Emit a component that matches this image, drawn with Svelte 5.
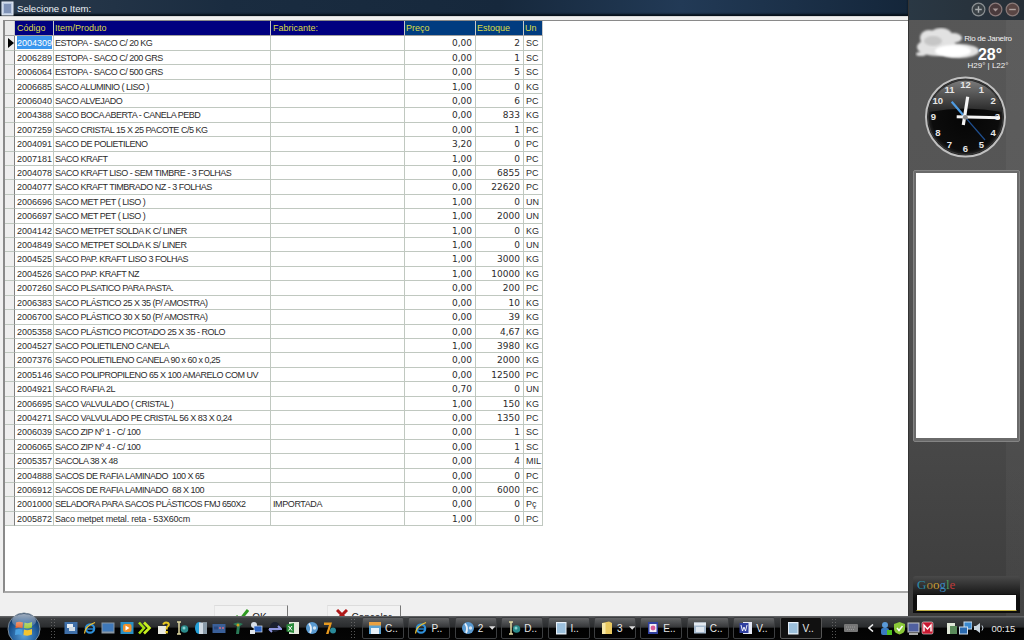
<script>
const rows = [
['2004309','ESTOPA - SACO C/ 20 KG','','0,00','2','SC'],
['2006289','ESTOPA - SACO C/ 200 GRS','','0,00','1','SC'],
['2006064','ESTOPA - SACO C/ 500 GRS','','0,00','5','SC'],
['2006685','SACO ALUMINIO ( LISO )','','1,00','0','KG'],
['2006040','SACO ALVEJADO','','0,00','6','PC'],
['2004388','SACO BOCA ABERTA - CANELA PEBD','','0,00','833','KG'],
['2007259','SACO CRISTAL 15 X 25 PACOTE C/5 KG','','0,00','1','PC'],
['2004091','SACO DE POLIETILENO','','3,20','0','PC'],
['2007181','SACO KRAFT','','1,00','0','PC'],
['2004078','SACO KRAFT LISO - SEM TIMBRE - 3 FOLHAS','','0,00','6855','PC'],
['2004077','SACO KRAFT TIMBRADO NZ - 3 FOLHAS','','0,00','22620','PC'],
['2006696','SACO MET PET ( LISO )','','1,00','0','UN'],
['2006697','SACO MET PET ( LISO )','','1,00','2000','UN'],
['2004142','SACO METPET SOLDA K C/ LINER','','1,00','0','KG'],
['2004849','SACO METPET SOLDA K S/ LINER','','1,00','0','UN'],
['2004525','SACO PAP. KRAFT LISO 3 FOLHAS','','1,00','3000','KG'],
['2004526','SACO PAP. KRAFT NZ','','1,00','10000','KG'],
['2007260','SACO PLSATICO PARA PASTA.','','0,00','200','PC'],
['2006383','SACO PLÁSTICO 25 X 35 (P/ AMOSTRA)','','0,00','10','KG'],
['2006700','SACO PLÁSTICO 30 X 50 (P/ AMOSTRA)','','0,00','39','KG'],
['2005358','SACO PLÁSTICO PICOTADO 25 X 35 - ROLO','','0,00','4,67','KG'],
['2004527','SACO POLIETILENO CANELA','','1,00','3980','KG'],
['2007376','SACO POLIETILENO CANELA 90 x 60 x 0,25','','0,00','2000','KG'],
['2005146','SACO POLIPROPILENO 65 X 100 AMARELO COM UV','','0,00','12500','PC'],
['2004921','SACO RAFIA 2L','','0,70','0','UN'],
['2006695','SACO VALVULADO ( CRISTAL )','','1,00','150','KG'],
['2004271','SACO VALVULADO PE CRISTAL 56 X 83 X 0,24','','0,00','1350','PC'],
['2006039','SACO ZIP Nº 1 - C/ 100','','0,00','1','SC'],
['2006065','SACO ZIP Nº 4 - C/ 100','','0,00','1','SC'],
['2005357','SACOLA 38 X 48','','0,00','4','MIL'],
['2004888','SACOS DE RAFIA LAMINADO  100 X 65','','0,00','0','PC'],
['2006912','SACOS DE RAFIA LAMINADO  68 X 100','','0,00','6000','PC'],
['2001000','SELADORA PARA SACOS PLÁSTICOS FMJ 650X2','IMPORTADA','0,00','0','Pç'],
['2005872','Saco metpet metal. reta - 53X60cm','','1,00','0','PC'],
];
const quick = ['printer','ie','monitor','play','chevrons','help','ibeam','book','film','figure','computers','arrows','excel','globe','seven'];
const tasks = [
 {t:'C..',i:'calc'},{t:'P..',i:'ie'},{t:'2',i:'globe',arrow:true},
 {t:'D..',i:'ibeam'},{t:'I..',i:'pale'},{t:'3',i:'folder',arrow:true},
 {t:'E..',i:'purple'},{t:'C..',i:'sheet'},{t:'V..',i:'word'},
 {t:'V..',i:'pale',active:true}
];
const numbers = Array.from({length:12},(_,k)=>{
  const n = k+1, a = n*Math.PI/6;
  return {n, x: 41.5+32*Math.sin(a), y: 41-32*Math.cos(a)+3.4};
});
</script>

{#snippet icon(name)}
  <svg class="ico" viewBox="0 0 14 14" width="14" height="14">
    {#if name==='printer'}
      <rect x="0.5" y="1" width="13" height="12" fill="#3f6fa8"/><rect x="3" y="3" width="6" height="4" fill="#e8eef4"/><rect x="5" y="6" width="6" height="4" fill="#cfdbe6"/>
    {:else if name==='ie'}
      <circle cx="7" cy="7.5" r="4.2" fill="none" stroke="#2f8fd8" stroke-width="2.2"/><path d="M3 8H11" stroke="#2f8fd8" stroke-width="1.4"/><path d="M1.5 12.5 Q2 5 12 1.5" fill="none" stroke="#f0c030" stroke-width="1.2"/>
    {:else if name==='monitor'}
      <rect x="0.5" y="1.5" width="13" height="11" fill="#8a97a4"/><rect x="1.5" y="2.5" width="11" height="8" fill="#3f78b8"/>
    {:else if name==='play'}
      <rect x="0.5" y="1" width="13" height="12" fill="#2a8fc4"/><rect x="3" y="3" width="8.5" height="8" rx="2" fill="#f0902a"/><path d="M5.5 4.5 L9.5 7 L5.5 9.5Z" fill="#fff"/>
    {:else if name==='chevrons'}
      <path d="M1 1.5 L6 7 L1 12.5" fill="none" stroke="#a8e010" stroke-width="2.6"/><path d="M6 1.5 L11.5 7 L6 12.5" fill="none" stroke="#c8f020" stroke-width="2.6"/>
    {:else if name==='help'}
      <rect x="1" y="5" width="8" height="8" fill="#e8e8e0"/><path d="M6 3.5 Q8 0.5 11 2 Q13 4 10 6 L9.5 8.5" fill="none" stroke="#e8c820" stroke-width="2"/><rect x="8.5" y="10" width="2.4" height="2.4" fill="#e8c820"/>
    {:else if name==='ibeam'}
      <path d="M2 1H6M4 1V13M2 13H6" stroke="#e0d8a0" stroke-width="1.5" fill="none"/><circle cx="9.5" cy="8" r="3.8" fill="#2a8a8a"/><circle cx="9" cy="7" r="1.5" fill="#8ad0d0"/>
    {:else if name==='book'}
      <ellipse cx="5" cy="7" rx="4" ry="6" fill="#24a0d8"/><rect x="5" y="1.5" width="8" height="11.5" fill="#d0dae2"/><rect x="9" y="1.5" width="4" height="11.5" fill="#8a9ba8"/>
    {:else if name==='film'}
      <rect x="0.5" y="3" width="13" height="9" fill="#3a5f98"/><circle cx="8" cy="7" r="1" fill="#d06a80"/><circle cx="11" cy="7" r="1" fill="#d06a80"/><rect x="2" y="5.5" width="4" height="3" fill="#2a4a80"/>
    {:else if name==='figure'}
      <path d="M2 3 Q7 0 12 3 L9 5 L8 13 L5 13 L6 5Z" fill="#2a7a58"/><circle cx="7" cy="4" r="1.5" fill="#d0a020"/>
    {:else if name==='computers'}
      <circle cx="5" cy="4" r="3" fill="#d8dfe8"/><rect x="5" y="5" width="8" height="6" fill="#2860c0" stroke="#d8e0ea" stroke-width=".7"/><rect x="1" y="9" width="5" height="4" fill="#e0e6ec"/>
    {:else if name==='arrows'}
      <circle cx="7" cy="6" r="5" fill="#1a1f30"/><path d="M1 8 H13 L10 5 M1 8 L4 11" fill="none" stroke="#8f96e0" stroke-width="2"/>
    {:else if name==='excel'}
      <rect x="3" y="1" width="10" height="12" fill="#e4eadc"/><path d="M0.5 3.5 L8 2 V12 L0.5 10.5Z" fill="#2a8a3a"/><path d="M2.5 5 L6 9.5 M6 5 L2.5 9.5" stroke="#fff" stroke-width="1"/>
    {:else if name==='globe'}
      <circle cx="7" cy="7" r="6" fill="#5a9ad0"/><path d="M4 2.5 Q7.5 7 5 12" fill="none" stroke="#e8f0f8" stroke-width="1.8"/><circle cx="9.5" cy="7" r="1.7" fill="#d0e2f0"/>
    {:else if name==='seven'}
      <path d="M1 1.5 H9 L5.5 13 H3 L6 4 H1Z" fill="#e89a20"/><circle cx="10" cy="9.5" r="3" fill="#2a8a9a"/>
    {:else if name==='calc'}
      <rect x="1" y="3" width="12" height="10" fill="#5aa0d0"/><rect x="1" y="1" width="12" height="3.5" fill="#e8a040"/><rect x="3" y="7" width="8" height="6" fill="#e8f0f6"/>
    {:else if name==='pale'}
      <rect x="2" y="1" width="10.5" height="12.5" fill="#e8f0f8"/><rect x="3" y="2.2" width="8.5" height="10" fill="#9cc0dc"/>
    {:else if name==='folder'}
      <path d="M2 2 L9 0.5 L12 2 V13 H2Z" fill="#e8c860"/><rect x="2" y="2" width="3.5" height="11" fill="#f6e8a8"/>
    {:else if name==='purple'}
      <rect x="2" y="1" width="10" height="12" fill="#3040a0"/><rect x="3.5" y="3" width="7" height="8" fill="#f4f0f8"/><circle cx="7" cy="7" r="2.4" fill="#d85a98"/>
    {:else if name==='sheet'}
      <rect x="1" y="1.5" width="12" height="11" fill="#a8bcd0"/><rect x="1" y="1.5" width="12" height="3" fill="#e4eaf0"/><rect x="3" y="6" width="8" height="5" fill="#dfe7ef"/>
    {:else if name==='word'}
      <rect x="4" y="1" width="9" height="12" fill="#e4e8f4"/><rect x="0.5" y="2" width="9" height="10" fill="#3040a0"/><path d="M2 4 L3.5 10 L5 6 L6.5 10 L8 4" fill="none" stroke="#fff" stroke-width=".9"/>
    {/if}
  </svg>
{/snippet}

<div class="screen">
  <div class="upper">
    <main class="win">
      <header class="title">
        <svg class="appicon" viewBox="0 0 13 15" width="13" height="15"><rect x="1" y="1" width="11" height="13" fill="#b8c8e0" stroke="#e8eef8"/><rect x="3" y="3" width="7" height="9" fill="#7f93b8"/></svg>
        <span>Selecione o Item:</span>
      </header>
      <div class="client">
        <div class="frame">
          <div class="grid">
            <div class="row head">
              <div class="ind"></div><div class="c1">Código</div><div class="c2h">Item/Produto</div><div class="c3h">Fabricante:</div><div class="blue">Preço</div><div class="blue">Estoque</div><div class="blue">Un</div>
            </div>
            {#each rows as r, i}
              <div class="row">
                <div class="ind">{#if i === 0}<svg viewBox="0 0 6 10" width="6" height="10"><path d="M0 0 L6 5 L0 10Z" fill="#000"/></svg>{/if}</div>
                <div class="c1" class:sel={i === 0}><span>{r[0]}</span></div>
                <div class="c2" class:mixed={i === 33}>{r[1]}</div>
                <div class="c3">{r[2]}</div>
                <div class="num">{r[3]}</div>
                <div class="num">{r[4]}</div>
                <div class="c6">{r[5]}</div>
              </div>
            {/each}
          </div>
        </div>
        <div class="buttons">
          <div class="btn ok"><svg viewBox="0 0 14 12" width="14" height="12"><path d="M1 7 L5 11 L13 1" fill="none" stroke="#2f9a22" stroke-width="3"/></svg><span>OK</span></div>
          <div class="btn cancel"><svg viewBox="0 0 12 12" width="12" height="12"><path d="M1 1 L11 11 M11 1 L1 11" fill="none" stroke="#b01818" stroke-width="3"/></svg><span>Cancelar</span></div>
        </div>
      </div>
    </main>
    <aside class="side">
      <div class="sidetop">
        <svg viewBox="0 0 16 16" width="15" height="15"><circle cx="8" cy="8" r="6.8" fill="#3a4146" stroke="#8a8f92" stroke-width="1.3"/><path d="M4.5 8H11.5M8 4.5V11.5" stroke="#a8acae" stroke-width="1.5"/></svg>
        <svg viewBox="0 0 16 16" width="15" height="15"><circle cx="8" cy="8" r="6.8" fill="#4a3a3c" stroke="#8a7a7a" stroke-width="1.3"/><path d="M5 7 L8 10 L11 7Z" fill="#a89a9a"/></svg>
        <svg viewBox="0 0 16 16" width="15" height="15"><circle cx="8" cy="8" r="6.8" fill="#5a4644" stroke="#8a7a78" stroke-width="1.3"/><path d="M4.5 8H11.5" stroke="#b0a4a2" stroke-width="1.5"/></svg>
      </div>
      <div class="weather">
        <svg class="cloud" viewBox="0 0 68 38" width="68" height="38">
          <defs><filter id="soft"><feGaussianBlur stdDeviation="0.9"/></filter></defs>
          <g fill="#e2e2e2" filter="url(#soft)">
            <ellipse cx="14" cy="11" rx="9" ry="8"/><ellipse cx="26" cy="8" rx="11" ry="7"/><ellipse cx="38" cy="11" rx="9" ry="5"/><ellipse cx="22" cy="20" rx="20" ry="9"/><ellipse cx="44" cy="24" rx="20" ry="7"/><ellipse cx="6" cy="27" rx="5" ry="2"/>
          </g>
          <ellipse cx="38" cy="24" rx="18" ry="6" fill="#ffffff" filter="url(#soft)"/>
          <ellipse cx="18" cy="14" rx="9" ry="5" fill="#c6c6c6" filter="url(#soft)"/>
        </svg>
        <div class="wtext">
          <div class="city">Rio de Janeiro</div>
          <div class="temp">28°</div>
          <div class="hl">H29° | L22°</div>
        </div>
      </div>
      <svg class="clock" viewBox="0 0 84 84" width="84" height="84">
        <defs>
          <radialGradient id="face" cx="50%" cy="50%" r="50%"><stop offset="0%" stop-color="#050505"/><stop offset="85%" stop-color="#0c0c0c"/><stop offset="100%" stop-color="#2e2e2e"/></radialGradient>
          <linearGradient id="gloss" x1="0" y1="0" x2="0" y2="1"><stop offset="0%" stop-color="#7a7a7a"/><stop offset="100%" stop-color="#262626"/></linearGradient>
        </defs>
        <circle cx="41.5" cy="41" r="39.5" fill="url(#face)" stroke="#c0c0c0" stroke-width="2"/>
        <circle cx="41.5" cy="41" r="37.5" fill="none" stroke="#3a3a3a" stroke-width="1"/>
        <path d="M4.5 36 A37.5 37.5 0 0 1 78.5 36 Q41.5 29 4.5 36Z" fill="url(#gloss)"/>
        {#each numbers as d}
          <text x={d.x} y={d.y} class="digit" text-anchor="middle">{d.n}</text>
        {/each}
        <path d="M27.7 25.7 L61 64" stroke="#1f4f90" stroke-width="1.2"/>
        <path d="M27.7 25.7 L40 40" stroke="#4f9be0" stroke-width="2.2"/>
        <path d="M43.7 20.7 L39.3 49" stroke="#f4f4f4" stroke-width="3.2"/>
        <path d="M32.7 40.7 L76 41.7" stroke="#f4f4f4" stroke-width="3"/>
        <circle cx="41.3" cy="41.3" r="2.4" fill="#8a8a8a"/>
      </svg>
      <div class="note"><div class="paper"></div></div>
      <div class="spacer"></div>
      <div class="gbox">
        <div class="google"><span class="g1">G</span><span class="g2">o</span><span class="g3">o</span><span class="g4">g</span><span class="g5">l</span><span class="g6">e</span></div>
        <div class="search"></div>
      </div>
    </aside>
  </div>
  <footer class="taskbar">
    <div class="start"><svg viewBox="0 0 34 34" width="34" height="34">
      <defs>
        <radialGradient id="orb" cx="50%" cy="70%" r="70%"><stop offset="0%" stop-color="#5aa0d8"/><stop offset="60%" stop-color="#1f5a98"/><stop offset="100%" stop-color="#0d2a50"/></radialGradient>
        <linearGradient id="shine" x1="0" y1="0" x2="0" y2="1"><stop offset="0%" stop-color="#fff" stop-opacity=".6"/><stop offset="100%" stop-color="#fff" stop-opacity=".08"/></linearGradient>
      </defs>
      <circle cx="17" cy="17" r="16" fill="url(#orb)" stroke="#7a8a98"/>
      <path d="M9 10.5 Q12 9 16 10.5 L15.5 16 Q12 15 8.5 16Z" fill="#e8642c"/><path d="M17.5 10.5 Q21 12 25 10 L25 15.5 Q21 17 17 16Z" fill="#9cc838"/><path d="M8.5 17.5 Q12 16.5 15.5 17.5 L15 23 Q11.5 22 8 23Z" fill="#4aa0e0"/><path d="M17 17.5 Q21 19 25 17 L25 22.5 Q21 24.5 16.5 23Z" fill="#f4c430"/>
      <ellipse cx="17" cy="9" rx="12" ry="7" fill="url(#shine)"/>
    </svg></div>
    <div class="dots"></div>
    <div class="quick">
      {#each quick as q}{@render icon(q)}{/each}
    </div>
    <div class="dots d2"></div>
    <div class="tasks">
      {#each tasks as t}
        <div class="task" class:active={t.active}>
          {@render icon(t.i)}
          <span class="tl">{t.t}</span>
          {#if t.arrow}<svg class="arr" viewBox="0 0 7 4" width="7" height="4"><path d="M0 0H7L3.5 4Z" fill="#ddd"/></svg>{/if}
        </div>
      {/each}
    </div>
    <div class="dots d3"></div>
    <div class="tray">
      <svg class="kbd" viewBox="0 0 14 8" width="14" height="8"><rect width="14" height="8" rx="1" fill="#777"/><path d="M2 3H12M3 5.5H11" stroke="#999" stroke-dasharray="1 1"/></svg>
      <svg class="chev" viewBox="0 0 6 8" width="6" height="8"><path d="M5 0.5 L1 4 L5 7.5" fill="none" stroke="#eee" stroke-width="1.6"/></svg>
      <div class="ticons">
        <svg viewBox="0 0 12 14" width="12" height="14"><circle cx="5" cy="4" r="3" fill="#5a9ad8"/><rect x="1" y="7" width="8" height="7" rx="2" fill="#3a7ac0"/><rect x="7" y="9" width="5" height="5" fill="#50c020"/></svg>
        <svg viewBox="0 0 13 14" width="13" height="14"><path d="M6.5 1 L12 3 V8 Q12 12 6.5 13.5 Q1 12 1 8 V3Z" fill="#8ac838"/><path d="M4 7 L6 9.5 L9.5 5" stroke="#fff" stroke-width="1.5" fill="none"/></svg>
        <svg viewBox="0 0 13 14" width="13" height="14"><rect x="1" y="2" width="11" height="9" fill="#5060a0" stroke="#c8c8c8"/><rect x="2" y="12" width="9" height="2" fill="#aaa"/></svg>
        <svg viewBox="0 0 13 14" width="13" height="14"><rect x="1" y="1" width="11" height="12" rx="1.5" fill="#c81830" stroke="#eee" stroke-width=".6"/><path d="M3 10.5 V4 L6.5 8 L10 4 V10.5" stroke="#fff" stroke-width="1.4" fill="none"/></svg>
      </div>
      <div class="ticons two">
        <svg viewBox="0 0 12 14" width="12" height="14"><rect x="1" y="2" width="8" height="11" fill="#e0e8d8"/><rect x="4" y="5" width="7" height="8" fill="#5a8a5a"/></svg>
        <svg viewBox="0 0 13 14" width="13" height="14"><rect x="5" y="1" width="8" height="7" fill="#3a8ad0" stroke="#cde"/><rect x="0.5" y="6" width="8" height="7" fill="#2a6ab0" stroke="#cde"/></svg>
        <svg viewBox="0 0 13 14" width="13" height="14"><path d="M1 5H3L7 2V12L3 9H1Z" fill="#c8d4de"/><path d="M9 4.5Q11 7 9 9.5" stroke="#c8d4de" fill="none"/></svg>
      </div>
      <span class="time">00:15</span>
    </div>
  </footer>
</div>

<style>
:global(body) { margin: 0; background: #f0f0f0; }
.screen { width: 1024px; height: 640px; display: flex; flex-direction: column; overflow: hidden; font-family: "Liberation Sans", sans-serif; }
.upper { height: 616px; display: flex; }
.win { width: 908px; display: flex; flex-direction: column; background: #f0f0f0; }
.title { height: 16px; flex: none; display: flex; align-items: center; gap: 3px; padding-left: 1px; color: #eef2f6; font-size: 9.6px; background: linear-gradient(90deg, #2a3a4c 0%, #1a2c40 25%, #16283c 55%, #223a56 75%, #14263a 100%); box-shadow: inset 0 -2px 2px #06101a; }
.appicon { flex: none; }
.client { flex: 1; display: flex; flex-direction: column; padding: 3px 0 0 3px; min-height: 0; border-top: 1px solid #d8d8d8; }
.frame { height: 573px; box-sizing: border-box; flex: none; background: #fff; border-left: 2px solid #8a8a8a; border-top: 1px solid #8a8a8a; border-bottom: 2px solid #a8a8a8; }
.grid { width: 539px; }
.row { display: grid; grid-template-columns: 10px 39px 217px 134px 71px 48px 19px; height: 14.42px; font-size: 9px; line-height: 14px; color: #2c2c2c; }
.row.head { height: 15.4px; line-height: 15px; }
.row > div { border-right: 1px solid #c0c8c0; border-bottom: 1px solid #c0c8c0; padding: 0 1px 0 2px; white-space: pre; overflow: hidden; box-sizing: border-box; }
.row > .c2 { padding-left: 1px; letter-spacing: -0.5px; }
.row > .c2.mixed { letter-spacing: -0.2px; }
.row > .c3 { letter-spacing: -0.4px; }
.row > .c2h { padding-left: 1px; }
.row > .blue { padding-left: 1px; }
.row > .ind { background: #eeeeee; padding: 2px 0 0 3px; border-right: 1px solid #808080; }
.row > .num { text-align: right; padding-right: 3px; font-family: "DejaVu Sans", sans-serif; font-size: 9px; }
.sel span { display: inline-block; background: #3a96ee; color: #fff; height: 13px; }
.head { color: #dcdc44; }
.row.head > div { background: #000080; border-right: 1px solid #c8c8c8; border-bottom: 1px solid #a0a0a0; }
.row.head > .blue { background: #003c80; }
.row.head > .ind { background: #e8e8e8; }
.buttons { flex: 1; display: flex; gap: 39px; padding: 12px 0 0 211px; overflow: hidden; }
.btn { width: 74px; height: 22px; flex: none; box-sizing: border-box; display: flex; justify-content: center; align-items: flex-start; gap: 3px; padding-top: 3px; background: #f2f2f2; border-top: 1px solid #dcdcdc; border-left: 1px solid #e4e4e4; border-right: 1px solid #777; font-size: 10px; color: #222; }
.btn span { margin-top: 3px; }
.side { width: 116px; display: flex; flex-direction: column; align-items: center; background: linear-gradient(90deg, transparent 84%, rgba(255,255,255,.035) 84%), linear-gradient(180deg, #575757 0%, #555 40%, #3c3c3c 100%); border-left: 1px solid #333; box-sizing: border-box; }
.sidetop { width: 100%; height: 20px; flex: none; box-sizing: border-box; display: flex; justify-content: flex-end; gap: 2px; padding: 2px 4px 0 0; background: linear-gradient(90deg, #2a3844, #262e36); }
.weather { width: 100%; height: 56px; flex: none; position: relative; }
.cloud { position: absolute; left: 6px; top: 7px; }
.wtext { position: absolute; right: 8px; top: 14px; text-align: center; color: #f2f2f2; width: 56px; }
.city { font-size: 8px; letter-spacing: -0.3px; white-space: nowrap; line-height: 10px; }
.temp { font-size: 16px; line-height: 14px; font-weight: 700; margin-top: 4px; padding-left: 4px; color: #fff; }
.hl { font-size: 8px; line-height: 8px; white-space: nowrap; }
.clock { flex: none; display: block; margin-right: 2px; }
.digit { font-size: 9.5px; fill: #e6e6e6; font-family: "Liberation Sans", sans-serif; font-weight: 700; }
.note { margin-top: 10px; width: 107px; height: 272px; flex: none; box-sizing: border-box; padding: 2px 2px 3px; background: #6a6a6a; border: 1px solid #848484; border-radius: 2px; }
.paper { height: 100%; background: #fff; }
.spacer { flex: 1; }
.gbox { width: 107px; height: 37px; flex: none; box-sizing: border-box; margin-bottom: 3px; padding: 0 3px; background: linear-gradient(180deg, #4a4a4a, #0e0e0e 60%); border-radius: 3px 3px 0 0; }
.google { font-family: "Liberation Serif", serif; font-size: 13px; line-height: 17px; height: 18px; padding-left: 1px; }
.g1 { color: #2a8aa8; } .g2 { color: #b08a3a; } .g3 { color: #d0a030; } .g4 { color: #3a8ac0; } .g5 { color: #4a9a5a; } .g6 { color: #c03a3a; }
.search { height: 15px; background: #fff; border: 1px solid #101010; border-bottom-color: #c0b040; }
.taskbar { height: 24px; flex: none; display: flex; align-items: center; position: relative; padding-left: 50px; background: linear-gradient(180deg, #6a6c6e 0%, #3c3e40 10%, #2a2c2e 45%, #030303 52%, #050505 100%); color: #eee; }
.start { position: absolute; left: 7px; top: -4px; width: 34px; height: 34px; }
.dots { width: 7px; height: 20px; flex: none; opacity: .7; background-image: radial-gradient(#777 0.8px, transparent 1px); background-size: 3px 3px; }
.d2 { margin-left: 13px; }
.d3 { margin-left: 9px; }
.ico { flex: none; display: block; }
.quick { display: flex; gap: 4.5px; margin-left: 7px; }
.tasks { display: flex; gap: 4.4px; margin-left: 5px; }
.task { width: 42px; height: 22px; flex: none; box-sizing: border-box; display: flex; align-items: center; gap: 3px; padding-left: 5px; font-size: 10px; border: 1px solid #3c3e40; border-radius: 2px; background: linear-gradient(180deg, rgba(255,255,255,.2), rgba(255,255,255,.05) 48%, rgba(0,0,0,.5) 52%); }
.task.active { background: #111; border-color: #555; }
.tl { color: #e8e8e8; font-weight: 500; }
.arr { margin-left: 3px; }
.tray { display: flex; align-items: center; flex: 1; margin-left: 6px; }
.kbd { margin-right: 10px; }
.chev { margin-right: 6px; }
.ticons { display: flex; gap: 1px; }
.ticons.two { margin-left: 12px; }
.time { font-size: 9.5px; margin-left: 6px; color: #e8e8e8; }
</style>
